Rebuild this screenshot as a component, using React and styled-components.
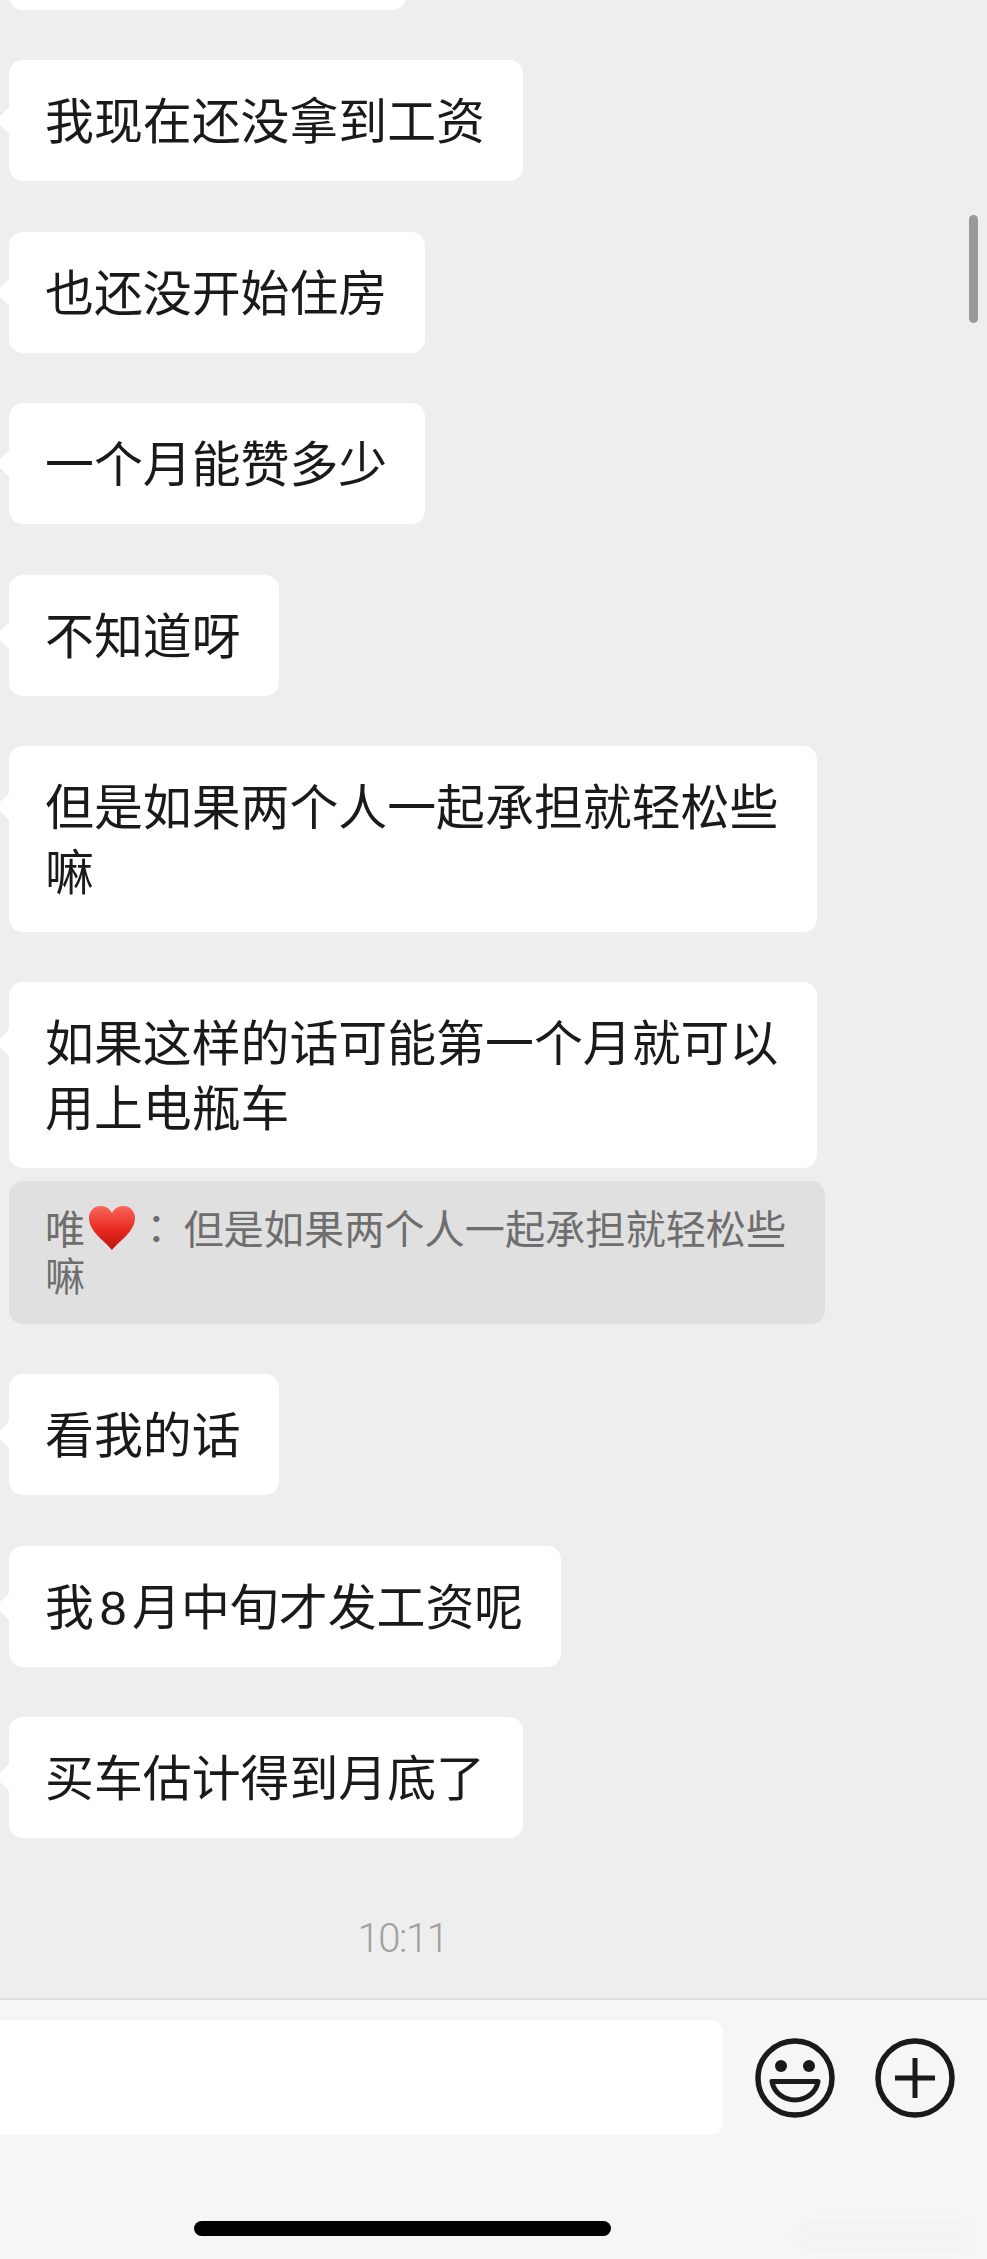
import React from 'react'
import styled, { createGlobalStyle } from 'styled-components'

const GlobalStyle = createGlobalStyle`
  html, body {
    margin: 0;
    padding: 0;
    background: #eeeeee;
  }
  * {
    box-sizing: border-box;
  }
`

function SmileIcon() {
  return (
    <svg width="80" height="80" viewBox="0 0 80 80" fill="none">
      <circle cx="40" cy="40" r="37" stroke="#1a1a1a" strokeWidth="5.5" />
      <circle cx="26" cy="28" r="6" fill="#1a1a1a" />
      <circle cx="54" cy="28" r="6" fill="#1a1a1a" />
      <path
        d="M17 43.5H63C61 55 51 62 40 62C29 62 19 55 17 43.5Z"
        stroke="#1a1a1a"
        strokeWidth="5"
        strokeLinejoin="round"
      />
    </svg>
  )
}

function PlusIcon() {
  return (
    <svg width="80" height="80" viewBox="0 0 80 80" fill="none">
      <circle cx="40" cy="40" r="37" stroke="#1a1a1a" strokeWidth="5.5" />
      <path d="M20 40H60M40 20V60" stroke="#1a1a1a" strokeWidth="5" />
    </svg>
  )
}

function Heart() {
  return (
    <HeartSvg viewBox="0 0 48 46">
      <defs>
        <linearGradient id="heartFill" x1="0" y1="0" x2="0" y2="1">
          <stop offset="0" stopColor="#f8675c" />
          <stop offset="0.55" stopColor="#e8281f" />
          <stop offset="1" stopColor="#b81410" />
        </linearGradient>
      </defs>
      <path
        d="M24 45C18 37 1 27 1 13C1 5.500 6.500 1 12.500 1C17.500 1 21.500 3.500 24 8C26.500 3.500 30.500 1 35.500 1C41.500 1 47 5.500 47 13C47 27 30 37 24 45Z"
        fill="url(#heartFill)"
      />
    </HeartSvg>
  )
}

function App() {
  return (
    <Screen>
      <GlobalStyle />
      <Chat>
        <Messages>
          <Bubble $minWidth={397} />
          <Bubble>我现在还没拿到工资</Bubble>
          <Bubble>也还没开始住房</Bubble>
          <Bubble>一个月能赞多少</Bubble>
          <Bubble>不知道呀</Bubble>
          <Bubble>但是如果两个人一起承担就轻松些嘛</Bubble>
          <QuotedGroup>
            <Bubble>如果这样的话可能第一个月就可以用上电瓶车</Bubble>
            <Quote>
              唯<Heart />
              <Colon>：</Colon>但是如果两个人一起承担就轻松些嘛
            </Quote>
          </QuotedGroup>
          <Bubble>看我的话</Bubble>
          <Bubble>我<Digit>8</Digit>月中旬才发工资呢</Bubble>
          <Bubble>买车估计得到月底了</Bubble>
        </Messages>
        <TimeRow>10:11</TimeRow>
      </Chat>
      <InputBar>
        <InputRow>
          <TextInput />
          <SmileIcon />
          <PlusSlot>
            <PlusIcon />
          </PlusSlot>
        </InputRow>
        <HomeBar />
        <Watermark />
      </InputBar>
      <ScrollThumb />
    </Screen>
  )
}

export default App

const Screen = styled.div`
  position: relative;
  width: 987px;
  height: 2259px;
  display: flex;
  flex-direction: column;
  overflow: hidden;
  background: #eeeeee;
  font-family: 'Noto Sans CJK SC', 'Noto Sans', sans-serif;
`

const Chat = styled.div`
  flex: 1;
  min-height: 0;
  display: flex;
  flex-direction: column;
  overflow: hidden;
`

const Messages = styled.div`
  display: flex;
  flex-direction: column;
  align-items: flex-start;
  gap: 50.4px;
  margin-top: -111px;
  padding-left: 9px;
`

const Bubble = styled.div`
  position: relative;
  min-width: ${(props) => props.$minWidth || 0}px;
  min-height: 121px;
  max-width: 808px;
  padding: 25px 38px 31px 36px;
  background: #ffffff;
  border-radius: 14px;
  color: #1a1a1a;
  font-size: 48.9px;
  font-weight: 400;
  line-height: 65px;

  &::before {
    content: '';
    position: absolute;
    left: -9px;
    top: 50px;
    width: 21px;
    height: 21px;
    background: #ffffff;
    border-radius: 3px;
    transform: rotate(45deg);
  }
`

const Digit = styled.span`
  font-family: 'Liberation Sans', sans-serif;
  line-height: 1;
  margin: 0 5.500px;
`

const QuotedGroup = styled.div`
  display: flex;
  flex-direction: column;
  align-items: flex-start;
  gap: 12.5px;
`

const Quote = styled.div`
  width: 816px;
  height: 143px;
  padding: 22px 36px 0 36px;
  background: #e0e0e0;
  border-radius: 14px;
  color: #6e6e6e;
  font-size: 40.2px;
  font-weight: 400;
  line-height: 47px;
`

const HeartSvg = styled.svg`
  width: 48px;
  height: 46px;
  margin: -6px 0 -6px 3px;
  vertical-align: -1px;
`

const Colon = styled.span`
  font-family: 'Noto Sans CJK TC', sans-serif;
  line-height: 1;
  margin-right: 7px;
`

const TimeRow = styled.div`
  width: 805px;
  margin-top: 72px;
  text-align: center;
  color: #a0a0a0;
  font-family: 'Roboto', sans-serif;
  font-size: 40px;
  font-weight: 300;
  letter-spacing: -1.4px;
  line-height: 58px;
`

const InputBar = styled.div`
  position: relative;
  flex: none;
  height: 261px;
  padding-top: 20px;
  background: #f6f6f6;
  border-top: 2px solid #dcdcdc;
`

const InputRow = styled.div`
  display: flex;
  align-items: center;
  height: 115px;
  padding-right: 32px;
`

const TextInput = styled.div`
  width: 723px;
  height: 115px;
  margin-right: 32px;
  background: #ffffff;
  border-radius: 0 12px 12px 0;
`

const PlusSlot = styled.div`
  display: flex;
  margin-left: 40px;
`

const HomeBar = styled.div`
  width: 417px;
  height: 15px;
  margin: 86px 0 0 194px;
  background: #000000;
  border-radius: 8px;
`

const Watermark = styled.div`
  position: absolute;
  right: 14px;
  bottom: 8px;
  width: 175px;
  height: 30px;
  background: #f0f0f0;
  filter: blur(6px);
  opacity: 0.5;
`

const ScrollThumb = styled.div`
  position: absolute;
  top: 215px;
  right: 9px;
  width: 9px;
  height: 108px;
  background: #999999;
  border-radius: 5px;
`
